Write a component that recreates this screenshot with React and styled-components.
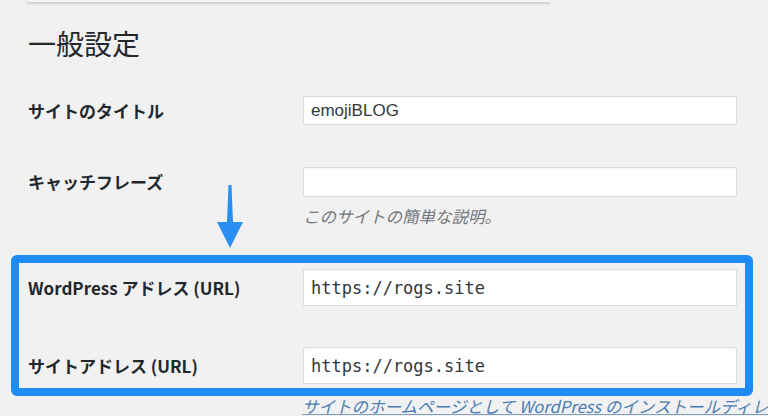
import React from "react";
import styled, { createGlobalStyle } from "styled-components";

const Global = createGlobalStyle`
  html, body { margin: 0; padding: 0; background: #f1f1f1; }
  body { overflow: hidden; font-family: "Noto Sans CJK JP", "Noto Sans", sans-serif; color: #23282d; }
`;

const Page = styled.div`
  position: relative;
  width: 768px;
  height: 416px;
  overflow: hidden;
  padding-left: 28px;
  box-sizing: border-box;
  display: flex;
  flex-direction: column;
`;

const TopBar = styled.div`
  width: 523px;
  height: 2px;
  margin-left: -1px;
  background: #f7f7f7;
  border-bottom: 1px solid #cfcfcf;
  box-shadow: 0 1px 3px rgba(0, 0, 0, 0.12);
`;

const Heading = styled.h1`
  margin: 26px 0 0;
  font-size: 28px;
  line-height: 28px;
  font-weight: 400;
  color: #23282d;
`;

const Row = styled.div`
  display: flex;
  align-items: center;
  margin-top: ${(p) => p.$gap}px;
`;

const Label = styled.label`
  width: 275px;
  flex: none;
  font-size: 17px;
  font-weight: 700;
  line-height: 20px;
  color: #23282d;
  white-space: nowrap;
`;

const Input = styled.div`
  width: 434px;
  height: ${(p) => p.$h}px;
  flex: none;
  box-sizing: border-box;
  background: #fff;
  border: 1px solid #dcdcdc;
  box-shadow: inset 0 1px 2px rgba(0, 0, 0, 0.04);
  display: flex;
  align-items: center;
  padding-left: 7px;
  font-family: ${(p) => (p.$mono ? '"DejaVu Sans Mono", monospace' : '"Liberation Sans", Arial, sans-serif')};
  font-size: 17px;
  color: #32373c;
`;

const Description = styled.p`
  margin: 9px 0 0 275px;
  font-size: 16.5px;
  line-height: 20px;
  font-style: italic;
  color: #72777c;
  white-space: nowrap;
`;

const Highlight = styled.div`
  margin: 29px 0 0 -17px;
  width: 742px;
  box-sizing: border-box;
  border: 8px solid #1e8cf6;
  border-radius: 6px;
  padding: 6px 8px 4px 9px;
`;

const HelpLink = styled.a`
  display: block;
  margin-left: 274px;
  font-size: 16.5px;
  line-height: 20px;
  font-style: italic;
  color: #4a7db3;
  text-decoration: underline;
  text-decoration-color: #7d9cbf;
  white-space: nowrap;
`;

const Arrow = styled.svg`
  position: absolute;
  left: 215px;
  top: 184px;
`;

export default function App() {
  return (
    <>
      <Global />
      <Page>
        <TopBar />
        <Heading>一般設定</Heading>
        <Row $gap={39}>
          <Label>サイトのタイトル</Label>
          <Input $h={29}>emojiBLOG</Input>
        </Row>
        <Row $gap={42}>
          <Label>キャッチフレーズ</Label>
          <Input $h={30} />
        </Row>
        <Description>このサイトの簡単な説明。</Description>
        <Highlight>
          <Row $gap={0}>
            <Label>WordPress アドレス (URL)</Label>
            <Input $h={37} $mono>https://rogs.site</Input>
          </Row>
          <Row $gap={41}>
            <Label>サイトアドレス (URL)</Label>
            <Input $h={37} $mono>https://rogs.site</Input>
          </Row>
        </Highlight>
        <HelpLink href="#">サイトのホームページとして WordPress のインストールディレクトリとは異なる場所を設定する場合は、ここにアドレスを入力してください。</HelpLink>
        <Arrow width="30" height="66" viewBox="0 0 30 66">
          <path d="M13.5 1 L16.5 1 L18 38 L28 38 L15 64 L2 38 L12 38 Z" fill="#2a8ef2" />
        </Arrow>
      </Page>
    </>
  );
}
